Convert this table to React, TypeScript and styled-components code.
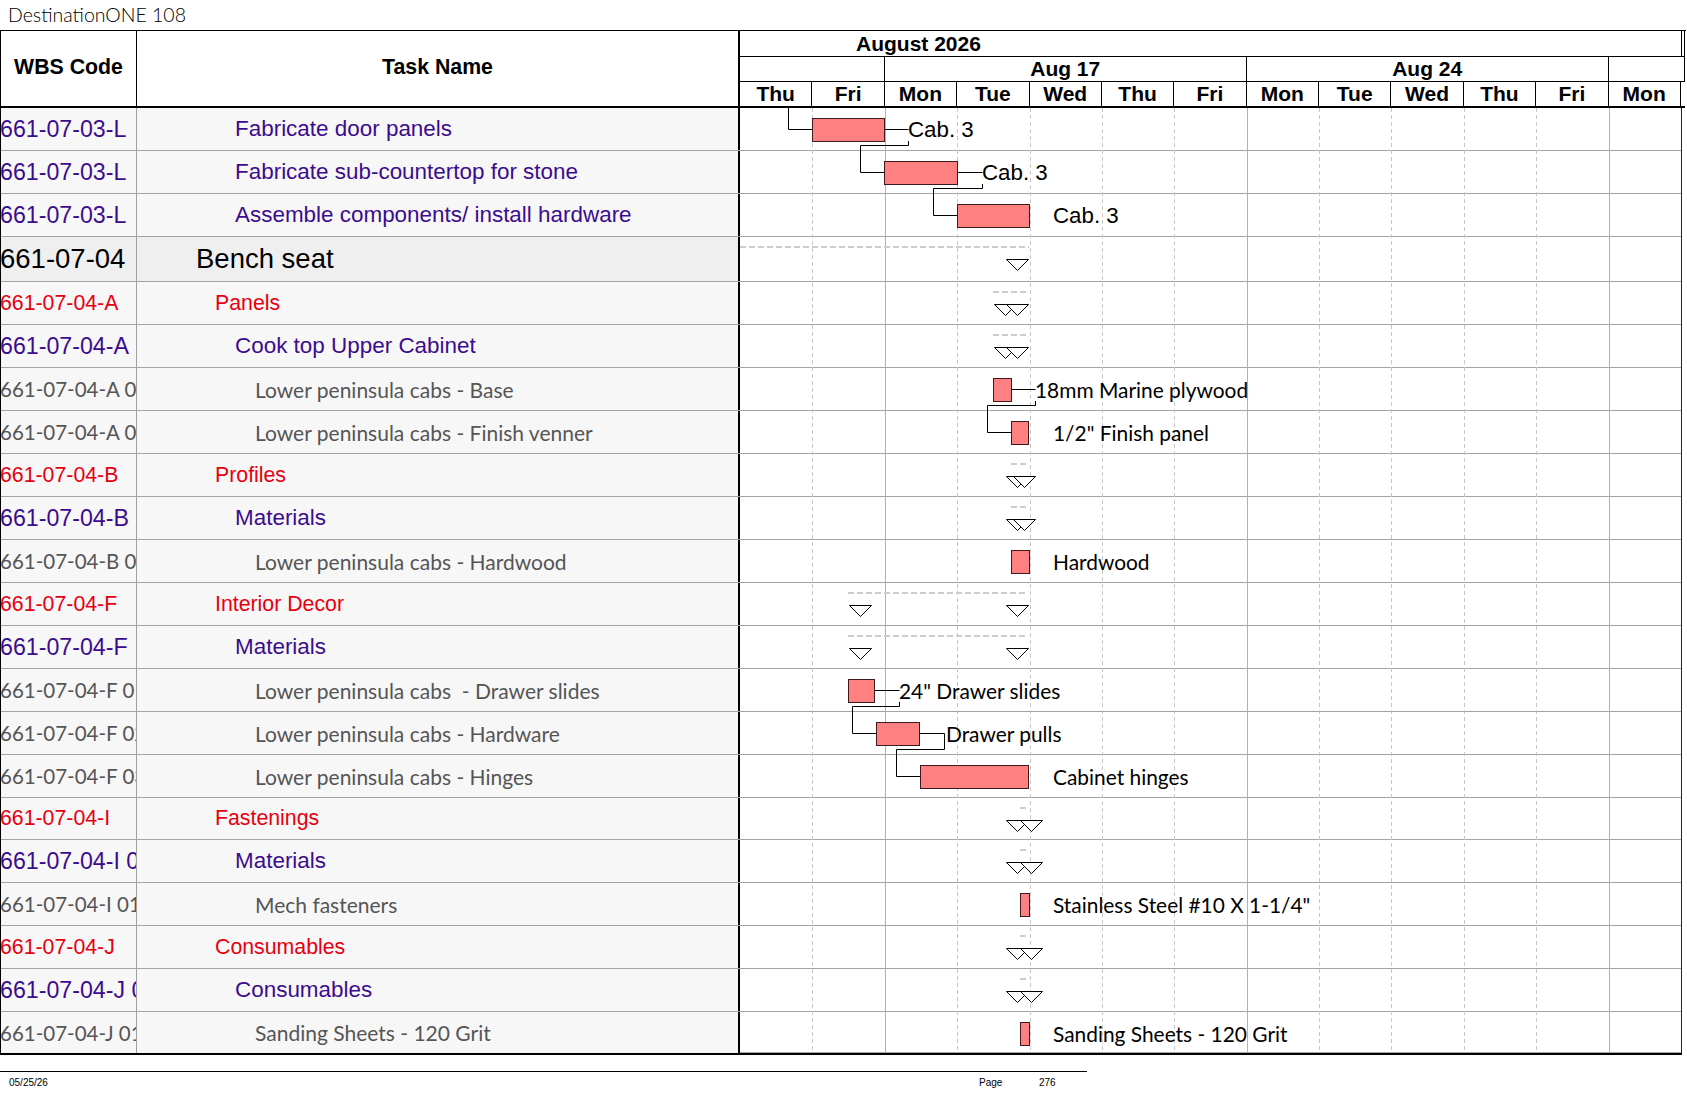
import React from 'react';
import styled, { createGlobalStyle } from 'styled-components';

const GlobalStyle = createGlobalStyle`
  html, body { margin: 0; padding: 0; background: #ffffff; }
  body { font-family: "Liberation Sans", Arial, sans-serif; }
  * { box-sizing: border-box; }
`;

const CHART_W = 941;
const DAY_W = CHART_W / 13;
const CX = 740;

type Kind = 'purple' | 'red' | 'summary' | 'gray';

interface BarData {
  x1: number;
  x2: number;
  label: string;
  lx: number;
  lead?: number;
  arial?: boolean;
}

interface RowData {
  kind: Kind;
  code: string;
  name: string;
  h?: number;
  bar?: BarData;
  dash?: [number, number];
  tris?: number[];
}

const rows: RowData[] = [
  { kind: 'purple', code: '661-07-03-L', name: 'Fabricate door panels', bar: { x1: 812, x2: 884, label: 'Cab. 3', lx: 908, lead: 908, arial: true } },
  { kind: 'purple', code: '661-07-03-L', name: 'Fabricate sub-countertop for stone', bar: { x1: 884, x2: 957, label: 'Cab. 3', lx: 982, lead: 982, arial: true } },
  { kind: 'purple', code: '661-07-03-L', name: 'Assemble components/ install hardware', bar: { x1: 957, x2: 1029, label: 'Cab. 3', lx: 1053, arial: true } },
  { kind: 'summary', code: '661-07-04', name: 'Bench seat', h: 45, dash: [740, 1029], tris: [1017] },
  { kind: 'red', code: '661-07-04-A', name: 'Panels', dash: [993, 1029], tris: [1005, 1017] },
  { kind: 'purple', code: '661-07-04-A', name: 'Cook top Upper Cabinet', dash: [993, 1029], tris: [1005, 1017] },
  { kind: 'gray', code: '661-07-04-A 01', name: 'Lower peninsula cabs - Base', bar: { x1: 993, x2: 1011, label: '18mm Marine plywood', lx: 1035, lead: 1035 } },
  { kind: 'gray', code: '661-07-04-A 02', name: 'Lower peninsula cabs - Finish venner', bar: { x1: 1011, x2: 1028, label: '1/2" Finish panel', lx: 1053 } },
  { kind: 'red', code: '661-07-04-B', name: 'Profiles', dash: [1011, 1029], tris: [1017, 1024] },
  { kind: 'purple', code: '661-07-04-B', name: 'Materials', dash: [1011, 1029], tris: [1017, 1024] },
  { kind: 'gray', code: '661-07-04-B 01', name: 'Lower peninsula cabs - Hardwood', bar: { x1: 1011, x2: 1029, label: 'Hardwood', lx: 1053 } },
  { kind: 'red', code: '661-07-04-F', name: 'Interior Decor', dash: [848, 1025], tris: [860, 1017] },
  { kind: 'purple', code: '661-07-04-F', name: 'Materials', dash: [848, 1025], tris: [860, 1017] },
  { kind: 'gray', code: '661-07-04-F 01', name: 'Lower peninsula cabs  - Drawer slides', bar: { x1: 848, x2: 874, label: '24" Drawer slides', lx: 899, lead: 899 } },
  { kind: 'gray', code: '661-07-04-F 02', name: 'Lower peninsula cabs - Hardware', bar: { x1: 876, x2: 919, label: 'Drawer pulls', lx: 946, lead: 944 } },
  { kind: 'gray', code: '661-07-04-F 03', name: 'Lower peninsula cabs - Hinges', bar: { x1: 920, x2: 1028, label: 'Cabinet hinges', lx: 1053 } },
  { kind: 'red', code: '661-07-04-I', name: 'Fastenings', h: 42, dash: [1020, 1029], tris: [1017, 1031] },
  { kind: 'purple', code: '661-07-04-I 01', name: 'Materials', dash: [1020, 1029], tris: [1017, 1031] },
  { kind: 'gray', code: '661-07-04-I 01 01', name: 'Mech fasteners', bar: { x1: 1020, x2: 1029, label: 'Stainless Steel #10 X 1-1/4"', lx: 1053 } },
  { kind: 'red', code: '661-07-04-J', name: 'Consumables', dash: [1020, 1029], tris: [1017, 1031] },
  { kind: 'purple', code: '661-07-04-J 01', name: 'Consumables', dash: [1020, 1029], tris: [1017, 1031] },
  { kind: 'gray', code: '661-07-04-J 01 01', name: 'Sanding Sheets - 120 Grit', h: 41, bar: { x1: 1020, x2: 1029, label: 'Sanding Sheets - 120 Grit', lx: 1053 } },
];

const heights = rows.map(r => r.h ?? 43);
const tops: number[] = [];
heights.reduce((acc, h, i) => {
  tops[i] = acc;
  return acc + h;
}, 0);
const TOTAL_H = heights.reduce((a, b) => a + b, 0);

interface LinkData { a: number; b: number; }
const links: LinkData[] = [
  { a: 0, b: 1 },
  { a: 1, b: 2 },
  { a: 6, b: 7 },
  { a: 13, b: 14 },
  { a: 14, b: 15 },
];

const days = ['Thu', 'Fri', 'Mon', 'Tue', 'Wed', 'Thu', 'Fri', 'Mon', 'Tue', 'Wed', 'Thu', 'Fri', 'Mon'];
const weekStarts = [2, 7, 12];

const Page = styled.div`
  width: 1687px;
  height: 1097px;
  overflow: hidden;
  background: #ffffff;
`;

const Title = styled.div`
  height: 30px;
  padding: 3px 0 0 8px;
  font-family: Lato, "Liberation Sans", sans-serif;
  font-weight: 300;
  font-size: 19.5px;
  line-height: 24px;
  color: #000000;
`;

const Sheet = styled.div`
  display: flex;
  flex-direction: column;
  width: 1686px;
`;

const HeadRow = styled.div`
  display: flex;
  height: 78px;
  border-top: 1px solid #000;
`;

const HeadCell = styled.div<{ $w: number; $first?: boolean }>`
  width: ${p => p.$w}px;
  height: 77px;
  display: flex;
  align-items: center;
  justify-content: center;
  border-left: ${p => (p.$first ? '1px solid #000' : 'none')};
  border-right: ${p => (p.$first ? '1px solid #000' : '2px solid #000')};
  border-bottom: 2px solid #000;
  font-weight: bold;
  font-size: 21.3px;
  color: #000;
  padding-bottom: 2px;
`;

const TimeHeader = styled.div`
  width: 945px;
  display: flex;
  flex-direction: column;
`;

const MonthRow = styled.div`
  display: flex;
  height: 26px;
  border-bottom: 1px solid #000;
  border-right: 1px solid #000;
`;

const MonthCell = styled.div`
  width: ${CHART_W + 1}px;
  border-right: 1px solid #000;
  padding-left: 116px;
  font-weight: bold;
  font-size: 21px;
  line-height: 25px;
`;

const WeekRow = styled.div`
  display: flex;
  height: 25px;
  border-bottom: 1px solid #000;
  border-right: 1px solid #000;
`;

const WeekCell = styled.div<{ $span: number; $extra?: number }>`
  width: ${p => p.$span * DAY_W + (p.$extra || 0)}px;
  flex: none;
  border-right: 1px solid #000;
  text-align: center;
  font-weight: bold;
  font-size: 21px;
  line-height: 24px;
  &:last-child { border-right: none; }
`;

const DayRow = styled.div`
  display: flex;
  height: 26px;
  border-bottom: 2px solid #000;
`;

const DayCell = styled.div`
  width: ${DAY_W}px;
  flex: none;
  border-right: 1px solid #000;
  text-align: center;
  font-weight: bold;
  font-size: 21px;
  line-height: 24px;
`;

const Body = styled.div`
  display: flex;
  width: 1682px;
  border-bottom: 2px solid #000;
`;

const LeftCol = styled.div`
  width: 740px;
  border-left: 1px solid #000;
  display: flex;
  flex-direction: column;
`;

const TableRow = styled.div<{ $summary: boolean; $h: number }>`
  display: flex;
  height: ${p => p.$h}px;
  border-bottom: 1px solid #a4a4a4;
  background: ${p => (p.$summary ? '#efefef' : '#f7f7f7')};
  &:last-child { border-bottom: none; }
`;

const kindColor: Record<Kind, string> = {
  purple: '#3c0c8e',
  red: '#e6000f',
  summary: '#000000',
  gray: '#555555',
};

const nameSize: Record<Kind, number> = {
  purple: 22.45,
  red: 21.3,
  summary: 27.5,
  gray: 21,
};

const codeSize: Record<Kind, number> = {
  purple: 23.2,
  red: 21.3,
  summary: 27.5,
  gray: 20.5,
};

const kindIndent: Record<Kind, number> = {
  purple: 98,
  red: 78,
  summary: 59,
  gray: 118,
};

const fontFor = (k: Kind) =>
  k === 'gray' ? 'Lato, "Liberation Sans", sans-serif' : '"Liberation Sans", Arial, sans-serif';

const CodeCell = styled.div<{ $kind: Kind }>`
  width: 136px;
  flex: none;
  border-right: 1px solid #a0a0a0;
  overflow: hidden;
  white-space: nowrap;
  display: flex;
  align-items: center;
  color: ${p => kindColor[p.$kind]};
  font-family: ${p => fontFor(p.$kind)};
  font-size: ${p => codeSize[p.$kind]}px;
  & > span { margin-left: -1px; }
`;

const NameCell = styled.div<{ $kind: Kind }>`
  width: 603px;
  flex: none;
  border-right: 2px solid #000;
  overflow: hidden;
  white-space: pre;
  display: flex;
  align-items: center;
  padding-left: ${p => kindIndent[p.$kind]}px;
  color: ${p => kindColor[p.$kind]};
  font-family: ${p => fontFor(p.$kind)};
  font-size: ${p => nameSize[p.$kind]}px;
`;

const ChartBody = styled.div`
  position: relative;
  width: ${CHART_W + 1}px;
  border-right: 1px solid #14149a;
  display: flex;
  flex-direction: column;
`;

const ChartRow = styled.div<{ $h: number }>`
  height: ${p => p.$h}px;
  border-bottom: 1px solid #a4a4a4;
  &:last-child { border-bottom: none; }
`;

const ChartCanvas = styled.svg`
  position: absolute;
  left: 0;
  top: 0;
  overflow: visible;
`;

const ArialLabel = styled.text`
  font-family: "Liberation Sans", Arial, sans-serif;
  font-size: 22.3px;
  fill: #000;
`;

const CalibriLabel = styled.text`
  font-family: Lato, "Liberation Sans", sans-serif;
  font-size: 20.9px;
  fill: #000;
`;

const Footer = styled.div`
  margin-top: 16px;
  width: 1087px;
  border-top: 1px solid #000;
  display: grid;
  grid-template-columns: 979px 60px 48px;
  padding-top: 5px;
  font-family: "Liberation Sans", Arial, sans-serif;
  font-size: 10px;
  line-height: 12px;
  color: #000;
`;

const FooterDate = styled.div`
  padding-left: 9px;
`;

const FooterText = styled.div``;

const px = (x: number) => Math.round(x - CX) + 0.5;

function Chart() {
  const H = TOTAL_H;
  const grid: React.ReactNode[] = [];
  for (let i = 1; i < 13; i++) {
    const x = Math.round(i * DAY_W) + 0.5;
    const solid = weekStarts.includes(i);
    grid.push(
      <line
        key={'g' + i}
        x1={x}
        x2={x}
        y1={0}
        y2={H}
        stroke={solid ? '#b2b2b2' : '#c6c6c6'}
        strokeWidth={1}
        strokeDasharray={solid ? undefined : '4 3'}
      />
    );
  }

  const shapes: React.ReactNode[] = [];
  rows.forEach((r, k) => {
    const top = tops[k];
    const c = top + 21.5;
    if (r.dash) {
      shapes.push(
        <line
          key={'d' + k}
          x1={r.dash[0] - CX}
          x2={r.dash[1] - CX}
          y1={top + 10}
          y2={top + 10}
          stroke="#cdcdcd"
          strokeWidth={2}
          strokeDasharray="6 3"
        />
      );
    }
    if (r.tris) {
      r.tris.forEach((t, i) => {
        const tx = t - CX + 0.5;
        const y0 = top + 22.5;
        shapes.push(
          <polygon
            key={'t' + k + '-' + i}
            points={`${tx - 11},${y0} ${tx + 11},${y0} ${tx},${y0 + 11}`}
            fill="#ffffff"
            stroke="#000"
            strokeWidth={1}
          />
        );
      });
    }
    if (r.bar) {
      const b = r.bar;
      if (b.lead) {
        shapes.push(
          <line key={'l' + k} x1={px(b.x2)} x2={px(b.lead)} y1={c} y2={c} stroke="#000" strokeWidth={1} />
        );
      }
      shapes.push(
        <rect
          key={'b' + k}
          x={px(b.x1)}
          y={top + 10.5}
          width={b.x2 - b.x1}
          height={23}
          fill="#ff8080"
          stroke="#3e1a1a"
          strokeWidth={1}
        />
      );
      const Label = b.arial ? ArialLabel : CalibriLabel;
      shapes.push(
        <Label key={'x' + k} x={b.lx - CX} y={b.arial ? c + 7 : c + 8.5}>
          {b.label}
        </Label>
      );
    }
  });

  const first = rows[0].bar!;
  shapes.push(
    <polyline
      key="in0"
      points={`${px(788)},0 ${px(788)},21.5 ${px(first.x1)},21.5`}
      fill="none"
      stroke="#000"
      strokeWidth={1}
    />
  );

  links.forEach((l, i) => {
    const a = rows[l.a].bar!;
    const b = rows[l.b].bar!;
    const topA = tops[l.a];
    const cA = topA + 21.5;
    const cB = tops[l.b] + 21.5;
    const tickX = a.lead!;
    const yTurn = topA + 37.5;
    const startY = tickX < a.lx ? cA : topA + 33;
    const dropX = b.x1 - 24;
    shapes.push(
      <polyline
        key={'k' + i}
        points={`${px(tickX)},${startY} ${px(tickX)},${yTurn} ${px(dropX)},${yTurn} ${px(dropX)},${cB} ${px(b.x1)},${cB}`}
        fill="none"
        stroke="#000"
        strokeWidth={1}
      />
    );
  });

  return (
    <ChartCanvas width={CHART_W} height={H} viewBox={`0 0 ${CHART_W} ${H}`}>
      {grid}
      {shapes}
    </ChartCanvas>
  );
}

export default function App() {
  return (
    <Page>
      <GlobalStyle />
      <Title>DestinationONE 108</Title>
      <Sheet>
        <HeadRow>
          <HeadCell $w={137} $first>WBS Code</HeadCell>
          <HeadCell $w={603}>Task Name</HeadCell>
          <TimeHeader>
            <MonthRow>
              <MonthCell>August 2026</MonthCell>
            </MonthRow>
            <WeekRow>
              <WeekCell $span={2} />
              <WeekCell $span={5}>Aug 17</WeekCell>
              <WeekCell $span={5}>Aug 24</WeekCell>
              <WeekCell $span={1} $extra={3} />
            </WeekRow>
            <DayRow>
              {days.map((d, i) => (
                <DayCell key={i}>{d}</DayCell>
              ))}
            </DayRow>
          </TimeHeader>
        </HeadRow>
        <Body>
          <LeftCol>
            {rows.map((r, k) => (
              <TableRow key={k} $summary={r.kind === 'summary'} $h={heights[k]}>
                <CodeCell $kind={r.kind}>
                  <span>{r.code}</span>
                </CodeCell>
                <NameCell $kind={r.kind}>{r.name}</NameCell>
              </TableRow>
            ))}
          </LeftCol>
          <ChartBody>
            {rows.map((_, k) => (
              <ChartRow key={k} $h={heights[k]} />
            ))}
            <Chart />
          </ChartBody>
        </Body>
        <Footer>
          <FooterDate>05/25/26</FooterDate>
          <FooterText>Page</FooterText>
          <FooterText>276</FooterText>
        </Footer>
      </Sheet>
    </Page>
  );
}
